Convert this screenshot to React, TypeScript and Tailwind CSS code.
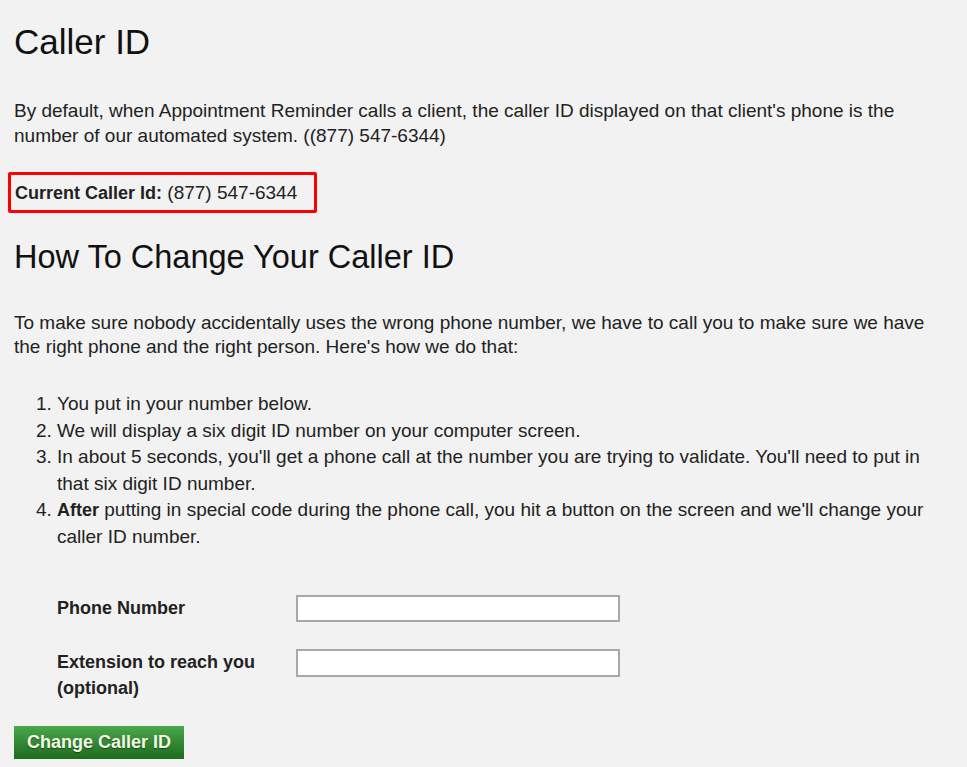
import React from "react";

export default function App() {
  return (
    <div
      className="min-h-screen w-full bg-[#f2f2f2] text-[#222222]"
      style={{ fontFamily: '"Liberation Sans", Arial, sans-serif' }}
    >
      <div className="pl-[14px] pr-[27px] pt-[22px] pb-[8px]">
        <h1 className="text-[35px] leading-[40px] font-normal text-[#111111]">Caller ID</h1>

        <p className="mt-[36px] text-[19px] leading-[25px]">
          By default, when Appointment Reminder calls a client, the caller ID displayed on that client's phone is the
          number of our automated system. ((877) 547-6344)
        </p>

        <div className="mt-[24px] -ml-[6px] box-border h-[41px] w-[309px] rounded-[2px] border-[3px] border-[#ff0000] pl-[4px] text-[19px] leading-[35px]">
          <span className="text-[18px] font-bold">Current Caller Id:</span> (877) 547-6344
        </div>

        <h2 className="mt-[25px] text-[32.5px] leading-[38px] font-normal text-[#111111]">How To Change Your Caller ID</h2>

        <p className="mt-[35px] text-[19px] leading-[24px]">
          To make sure nobody accidentally uses the wrong phone number, we have to call you to make sure we have the
          right phone and the right person. Here's how we do that:
        </p>

        <ol className="mt-[32px] list-decimal pl-[43px] text-[19px] leading-[26.5px]">
          <li>You put in your number below.</li>
          <li>We will display a six digit ID number on your computer screen.</li>
          <li>
            In about 5 seconds, you'll get a phone call at the number you are trying to validate. You'll need to put in
            that six digit ID number.
          </li>
          <li>
            <b className="text-[18px] font-bold">After</b> putting in special code during the phone call, you hit a
            button on the screen and we'll change your caller ID number.
          </li>
        </ol>

        <div className="mt-[45px] flex flex-col gap-[27px] pl-[43px]">
          <div className="flex items-start">
            <label className="w-[239px] text-[18px] font-bold leading-[26px]">Phone Number</label>
            <input
              type="text"
              className="box-border h-[27px] w-[324px] border-2 border-[#a8a8a8] bg-white outline-none"
            />
          </div>
          <div className="flex items-start">
            <label className="w-[239px] text-[18px] font-bold leading-[26px]">
              Extension to reach you (optional)
            </label>
            <input
              type="text"
              className="box-border h-[28px] w-[324px] border-2 border-[#a8a8a8] bg-white outline-none"
            />
          </div>
        </div>

        <button
          type="button"
          className="mt-[25px] box-border h-[33px] w-[170px] bg-gradient-to-b from-[#4aa84a] to-[#1d6b1d] text-[18px] font-bold leading-[33px] text-[#f4fbe8] [text-shadow:0_1px_1px_rgba(0,0,0,0.45)]"
        >
          Change Caller ID
        </button>
      </div>
    </div>
  );
}
